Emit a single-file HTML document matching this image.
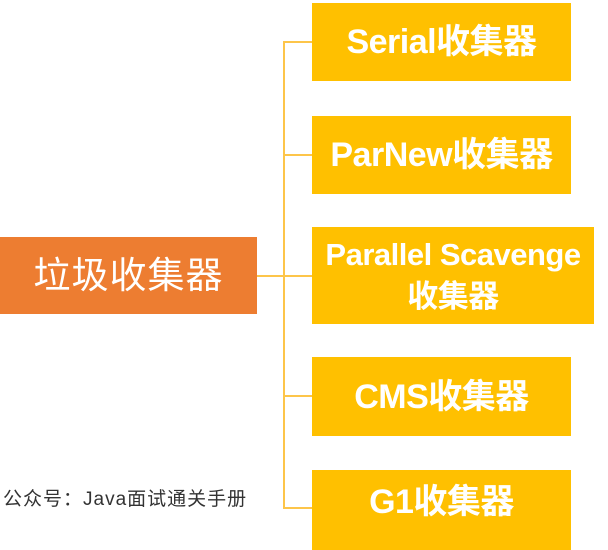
<!DOCTYPE html>
<html><head><meta charset="utf-8"><style>
body{margin:0;width:608px;height:531px;background:#fff;position:relative;overflow:hidden;font-family:"Liberation Sans","Noto Sans CJK SC",sans-serif}
.b{position:absolute;background:#ffc000;color:#fff;font-weight:bold;display:flex;align-items:center;justify-content:center;text-align:center;font-size:34px;line-height:42px;letter-spacing:-0.5px;white-space:nowrap}
.l{position:absolute;background:#fdc54a}
</style></head><body>
<div class="b" style="left:0;top:237px;width:257px;height:77px;background:#ed7d31;font-weight:normal;font-size:37px;letter-spacing:1px">垃圾收集器</div>
<div class="l" style="left:283px;top:42px;width:2px;height:467px"></div>
<div class="l" style="left:257px;top:275px;width:55px;height:2px"></div>
<div class="l" style="left:283px;top:41px;width:29px;height:2px"></div>
<div class="l" style="left:283px;top:154px;width:29px;height:2px"></div>
<div class="l" style="left:283px;top:395px;width:29px;height:2px"></div>
<div class="l" style="left:283px;top:507px;width:29px;height:2px"></div>
<div class="b" style="left:312px;top:3px;width:259px;height:78px">Serial收集器</div>
<div class="b" style="left:312px;top:116px;width:259px;height:78px">ParNew收集器</div>
<div class="b" style="left:312px;top:227px;width:282px;height:97px;font-size:31px;line-height:42px">Parallel Scavenge<br>收集器</div>
<div class="b" style="left:312px;top:357px;width:259px;height:79px">CMS收集器</div>
<div class="b" style="left:312px;top:470px;width:259px;height:80px;padding-bottom:16px;box-sizing:border-box">G1收集器</div>
<div style="position:absolute;left:3px;top:484px;font-size:19px;letter-spacing:1px;color:#333">公众号：Java面试通关手册</div>
</body></html>
